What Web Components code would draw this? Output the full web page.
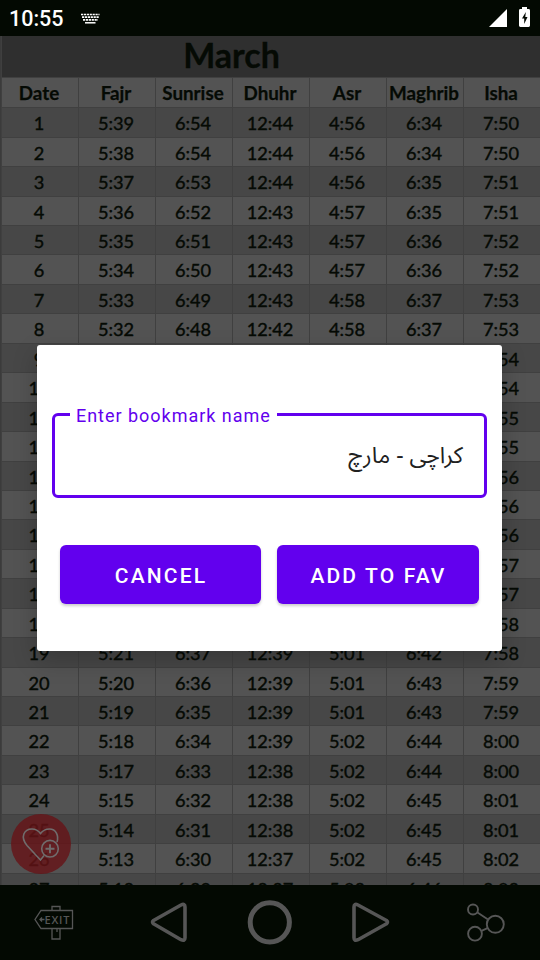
<!DOCTYPE html>
<html lang="en">
<head>
<meta charset="utf-8">
<title>Prayer Times</title>
<style>
body {
    margin: 0;
    background: #030902;
    font-family: Roboto, "Liberation Sans", sans-serif;
}
</style>
</head>
<body>
<pt-app></pt-app>
<script>
class PtStatusBar extends HTMLElement {

    constructor() {
        super();
        this.root = this.attachShadow({mode: 'open'});
    }

    connectedCallback() {
        this.root.innerHTML = `
        <style>
        :host {
            display: flex;
            align-items: center;
            height: 36px;
            box-sizing: border-box;
            padding: 0 9px;
            background: #030902;
            color: #fff;
        }
        .time {
            font-size: 21.5px;
            font-weight: 500;
            line-height: 36px;
            padding-top: 2px;
            width: 72px;
        }
        .gap { flex: 1; }
        svg { display: block; }
        .signal { margin-right: 12px; }
        .battery { margin: -2px 1px 0 0; }
        </style>
        <span class="time">10:55</span>
        <svg width="19" height="11" viewBox="0 0 19 11">
            <path d="M0 1.5h18.5M1 4.2h17M2 6.9h15" stroke="#fff" stroke-width="1.7" stroke-dasharray="2.2 .7"/>
            <path d="M4 9.8h10.5" stroke="#fff" stroke-width="1.5"/>
        </svg>
        <span class="gap"></span>
        <svg class="signal" width="18" height="18" viewBox="0 0 18 18"><path d="M18 0v18H0z" fill="#fff"/></svg>
        <svg class="battery" width="11" height="20" viewBox="0 0 11 20">
            <path d="M3 0h5v2h1.6q1.4 0 1.4 1.4v15.2q0 1.4-1.4 1.4H1.4Q0 20 0 18.6V3.4Q0 2 1.4 2H3z" fill="#fff"/>
            <path d="M6.8 5L3 11.5h2.2V17L8.5 10H6.3z" fill="#030902"/>
        </svg>
        `;
    }

}

const TIMES = [
    ['1', '5:39', '6:54', '12:44', '4:56', '6:34', '7:50'],
    ['2', '5:38', '6:54', '12:44', '4:56', '6:34', '7:50'],
    ['3', '5:37', '6:53', '12:44', '4:56', '6:35', '7:51'],
    ['4', '5:36', '6:52', '12:43', '4:57', '6:35', '7:51'],
    ['5', '5:35', '6:51', '12:43', '4:57', '6:36', '7:52'],
    ['6', '5:34', '6:50', '12:43', '4:57', '6:36', '7:52'],
    ['7', '5:33', '6:49', '12:43', '4:58', '6:37', '7:53'],
    ['8', '5:32', '6:48', '12:42', '4:58', '6:37', '7:53'],
    ['9', '', '', '', '', '', '7:54'],
    ['10', '', '', '', '', '', '7:54'],
    ['11', '', '', '', '', '', '7:55'],
    ['12', '', '', '', '', '', '7:55'],
    ['13', '', '', '', '', '', '7:56'],
    ['14', '', '', '', '', '', '7:56'],
    ['15', '', '', '', '', '', '7:56'],
    ['16', '', '', '', '', '', '7:57'],
    ['17', '', '', '', '', '', '7:57'],
    ['18', '', '', '', '', '', '7:58'],
    ['19', '5:21', '6:37', '12:39', '5:01', '6:42', '7:58'],
    ['20', '5:20', '6:36', '12:39', '5:01', '6:43', '7:59'],
    ['21', '5:19', '6:35', '12:39', '5:01', '6:43', '7:59'],
    ['22', '5:18', '6:34', '12:39', '5:02', '6:44', '8:00'],
    ['23', '5:17', '6:33', '12:38', '5:02', '6:44', '8:00'],
    ['24', '5:15', '6:32', '12:38', '5:02', '6:45', '8:01'],
    ['25', '5:14', '6:31', '12:38', '5:02', '6:45', '8:01'],
    ['26', '5:13', '6:30', '12:37', '5:02', '6:45', '8:02'],
    ['27', '5:12', '6:29', '12:37', '5:03', '6:46', '8:03']
];

class PtTimetable extends HTMLElement {

    constructor() {
        super();
        this.root = this.attachShadow({mode: 'open'});
    }

    connectedCallback() {
        const names = ['Date', 'Fajr', 'Sunrise', 'Dhuhr', 'Asr', 'Maghrib', 'Isha'];
        const row = (cells, cls) => `<div class="row ${cls}">${cells.map(c => `<span>${c}</span>`).join('')}</div>`;
        this.root.innerHTML = `
        <style>
        :host {
            display: block;
            overflow: hidden;
            box-sizing: border-box;
            padding: 0 0 0 1px;
            background: #3b3b3b;
            color: #050a04;
            font-family: Lato, Carlito, sans-serif;
        }
        .month {
            height: 41px;
            line-height: 38px;
            padding-right: 79px;
            background: #2f2f2f;
            border-left: 1px solid #3f3f3f;
            text-align: center;
            font-size: 34px;
            font-weight: 700;
            -webkit-text-stroke: .3px #050a04;
        }
        .row {
            display: grid;
            grid-template-columns: repeat(7, 77px);
            height: 29.45px;
            box-sizing: border-box;
            border-top: 1px solid #404040;
            background: #474747;
            font-size: 18.2px;
            line-height: 30px;
            -webkit-text-stroke: .4px #050a04;
        }
        .days .row:nth-child(even) { background: #535353; }
        .row.head {
            height: 30.3px;
            background: #535353;
            font-weight: 700;
            line-height: 29px;
            font-size: 18.8px;
            -webkit-text-stroke: .25px #050a04;
        }
        .row span {
            border-left: 1px solid #404040;
            padding-right: 2px;
            text-align: center;
            white-space: nowrap;
        }
        </style>
        <div class="month">March</div>
        ${row(names, 'head')}
        <div class="days">${TIMES.map(t => row(t, '')).join('')}</div>
        `;
    }

}

class PtFavButton extends HTMLElement {

    constructor() {
        super();
        this.root = this.attachShadow({mode: 'open'});
    }

    connectedCallback() {
        this.root.innerHTML = `
        <style>
        :host {
            display: block;
            width: 60px;
            height: 60px;
            border-radius: 50%;
            background: rgba(101, 20, 23, .82);
        }
        svg { display: block; }
        </style>
        <svg width="60" height="60" viewBox="0 0 60 60" fill="none" stroke="#706c6c" stroke-width="1.6">
            <path d="M33 41.5L29.5 46 16 31.5C9 23 13 15 21 15q5 0 8.5 4.5 3.5-4.5 9-4.5c6.5 0 9.5 6.5 7.5 13"/>
            <circle cx="39" cy="34.7" r="8.3"/>
            <path d="M39 30.2v9M34.5 34.7h9" stroke-width="1.9"/>
        </svg>
        `;
    }

}

class PtNavBar extends HTMLElement {

    constructor() {
        super();
        this.root = this.attachShadow({mode: 'open'});
    }

    connectedCallback() {
        this.root.innerHTML = `
        <style>
        :host {
            display: grid;
            grid-template-columns: repeat(5, 108px);
            height: 75px;
            background: #030902;
        }
        svg { display: block; }
        text { font: 600 11px "Open Sans", sans-serif; }
        </style>
        <svg viewBox="0 0 108 75" fill="none" stroke="#565656" stroke-width="1.3">
            <path d="M41 25.5h31.5v18H41l-6-9z"/>
            <path d="M52 25.5v-4h8v4M52 43.5V54h8V43.5"/>
            <path d="M57 44v3"/>
            <path d="M44.5 34.5H40m2-2l-2 2 2 2"/>
            <text x="44.5" y="38.5" textLength="25" fill="#565656" stroke="none">EXIT</text>
        </svg>
        <svg viewBox="108 0 108 75" fill="none" stroke="#565656" stroke-width="3.6" stroke-linejoin="round">
            <path d="M153.5 35.5Q151.5 37 153.5 38.8L181 54.7Q185 56.5 185 52.7V22Q185 18 181 20z"/>
        </svg>
        <svg viewBox="216 0 108 75" fill="none" stroke="#565656" stroke-width="5">
            <circle cx="269.8" cy="37.3" r="19.6"/>
        </svg>
        <svg viewBox="324 0 108 75" fill="none" stroke="#565656" stroke-width="3.6" stroke-linejoin="round">
            <path d="M386.5 35.5Q388.5 37 386.5 38.8L358 54.7Q354 56.5 354 52.7V22Q354 18 358 20z"/>
        </svg>
        <svg viewBox="432 0 108 75" fill="none" stroke="#565656" stroke-width="1.9">
            <circle cx="473" cy="24.5" r="5"/>
            <circle cx="475" cy="48.7" r="6.9"/>
            <circle cx="495.3" cy="39.3" r="8.5"/>
            <path d="M477.5 27.5l10.5 7M481.5 45.8l6-2.6"/>
        </svg>
        `;
    }

}

class PtTextField extends HTMLElement {

    constructor() {
        super();
        this.root = this.attachShadow({mode: 'open'});
    }

    connectedCallback() {
        this.root.innerHTML = `
        <style>
        :host { display: block; }
        fieldset {
            margin: 0;
            height: 92px;
            box-sizing: border-box;
            padding: 0 21px;
            border: 3px solid #6200ee;
            border-radius: 6px;
            min-width: 0;
        }
        legend {
            margin-left: -6px;
            height: 15px;
            padding: 1px 6px 0;
            color: #6200ee;
            font-size: 18px;
            line-height: 17px;
            letter-spacing: .97px;
            white-space: nowrap;
        }
        .value {
            direction: rtl;
            color: #202020;
            font-family: "Noto Sans Arabic", "Noto Naskh Arabic", "Noto Sans", "DejaVu Sans", sans-serif;
            font-size: 22.8px;
            line-height: 68px;
        }
        </style>
        <fieldset>
            <legend>${this.getAttribute('label')}</legend>
            <div class="value"><slot></slot></div>
        </fieldset>
        `;
    }

}

class PtButton extends HTMLElement {

    constructor() {
        super();
        this.root = this.attachShadow({mode: 'open'});
    }

    connectedCallback() {
        this.root.innerHTML = `
        <style>
        :host {
            display: block;
            height: 59px;
            box-sizing: border-box;
            padding-left: 1px;
            border-radius: 6px;
            background: #6200ee;
            color: #fff;
            text-align: center;
            font-size: 21px;
            font-weight: 500;
            line-height: 62px;
            letter-spacing: 2.15px;
            box-shadow: 0 2px 3px rgba(0, 0, 0, .2);
        }
        </style>
        <slot></slot>
        `;
    }

}

class PtDialog extends HTMLElement {

    constructor() {
        super();
        this.root = this.attachShadow({mode: 'open'});
    }

    connectedCallback() {
        this.root.innerHTML = `
        <style>
        :host {
            display: flex;
            flex-direction: column;
            gap: 47px;
            box-sizing: border-box;
            width: 465px;
            height: 306px;
            padding: 61px 15px 0;
            background: #fff;
            border-radius: 3px;
            box-shadow: 0 9px 24px rgba(0, 0, 0, .22);
        }
        .actions {
            display: grid;
            grid-template-columns: 201px 202px;
            gap: 16px;
            padding-left: 8px;
        }
        </style>
        <slot></slot>
        <div class="actions"><slot name="action"></slot></div>
        `;
    }

}

class PtApp extends HTMLElement {

    constructor() {
        super();
        this.root = this.attachShadow({mode: 'open'});
    }

    connectedCallback() {
        this.root.innerHTML = `
        <style>
        :host {
            display: flex;
            flex-direction: column;
            position: relative;
            width: 540px;
            height: 960px;
            overflow: hidden;
        }
        pt-status-bar, pt-nav-bar { flex: none; }
        pt-timetable { flex: 1; min-height: 0; }
        pt-fav-button { position: absolute; left: 11px; top: 814px; }
        .overlay {
            position: absolute;
            inset: 36px 0 0;
            display: flex;
            align-items: center;
            justify-content: center;
            padding-right: 1px;
        }
        </style>
        <pt-status-bar></pt-status-bar>
        <pt-timetable></pt-timetable>
        <pt-nav-bar></pt-nav-bar>
        <pt-fav-button></pt-fav-button>
        <div class="overlay">
            <pt-dialog>
                <pt-text-field label="Enter bookmark name">کراچی - مارچ</pt-text-field>
                <pt-button slot="action">CANCEL</pt-button>
                <pt-button slot="action">ADD TO FAV</pt-button>
            </pt-dialog>
        </div>
        `;
    }

}

customElements.define('pt-status-bar', PtStatusBar);
customElements.define('pt-timetable', PtTimetable);
customElements.define('pt-fav-button', PtFavButton);
customElements.define('pt-nav-bar', PtNavBar);
customElements.define('pt-text-field', PtTextField);
customElements.define('pt-button', PtButton);
customElements.define('pt-dialog', PtDialog);
customElements.define('pt-app', PtApp);
</script>
</body>
</html>
